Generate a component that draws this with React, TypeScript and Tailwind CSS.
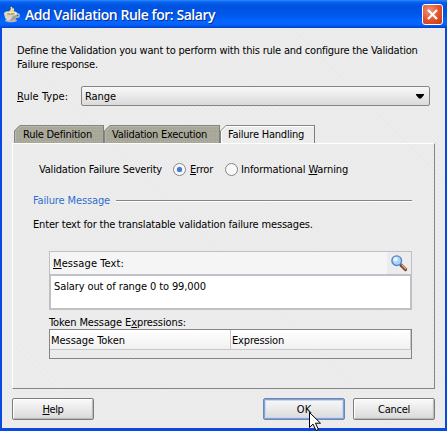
import type { ReactNode } from "react";

function Key({ children }: { children: ReactNode }) {
  return <span className="underline decoration-1 underline-offset-1">{children}</span>;
}

function CupIcon() {
  return (
    <svg width="18" height="20" viewBox="0 0 18 20" className="mr-[3px] shrink-0">
      <ellipse cx="8" cy="16.5" rx="6" ry="1.8" fill="#b9b7b2" />
      <ellipse cx="14" cy="11.5" rx="2.200" ry="1.800" fill="none" stroke="#c5c1b8" strokeWidth="1.400" />
      <path d="M1.200 9.500c0 4.500 2.600 7.600 6.500 7.600s6.500-3.100 6.500-7.600z" fill="#d9d6ce" />
      <path d="M8 17c3.600-.3 6.200-3 6.200-7.500H10c0 3-1 5.500-4 7z" fill="#a3a09a" />
      <ellipse cx="7.700" cy="9.500" rx="6.500" ry="2.300" fill="#f4f1e8" stroke="#b9b5aa" strokeWidth=".6" />
      <ellipse cx="7.700" cy="9.800" rx="4.300" ry="1.100" fill="#b39a62" />
      <path d="M8 9.500c-3.500-2 3-3 0-6.500M9.500 9c-1-1.500 2-2.500 .5-4.500" fill="none" stroke="#ffe680" strokeWidth="1.600" />
    </svg>
  );
}

function Magnifier() {
  return (
    <svg width="18" height="18" viewBox="0 0 18 18">
      <path d="M11 11l4.500 4.500" stroke="#7a4632" strokeWidth="3.200" strokeLinecap="round" />
      <path d="M12 11l3.700 3.700" stroke="#dbaa86" strokeWidth="1.300" strokeLinecap="round" />
      <circle cx="6.700" cy="6.700" r="4.800" fill="#a9d3fb" stroke="#5284cc" strokeWidth="1.400" />
      <circle cx="5.500" cy="5.300" r="2.200" fill="#e8f5ff" />
    </svg>
  );
}

function Tab({ label, className, active }: { label: string; className: string; active?: boolean }) {
  return (
    <div className={`relative h-[18px] shrink-0 pt-[3px] ${active ? "z-10" : ""} ${className}`}>
      <svg className="absolute inset-0 h-full w-full" aria-hidden="true">
        <defs>
          <pattern id="dither" width="4" height="4" patternUnits="userSpaceOnUse">
            <rect width="4" height="4" fill="#a8a69c" />
            <rect width="1" height="1" fill="#b3c080" />
            <rect x="2" y="2" width="1" height="1" fill="#a0b884" />
            <rect x="2" width="1" height="1" fill="#b3a9ae" />
          </pattern>
        </defs>
        <path d="M0 18V6L6 0H400V18z" fill={active ? "#ececec" : "url(#dither)"} />
        <path d="M.5 18V6L6 .5H400" fill="none" stroke="#858585" />
        <path d="M1.500 18V6.500L6.500 1.500H400" fill="none" stroke={active ? "#fff" : "#b8b6ac"} />
      </svg>
      <div className="absolute top-0 right-0 h-[18px] w-px bg-[#7d7d7d]" />
      <span className="relative">{label}</span>
    </div>
  );
}

function Button({ children, focused }: { children: ReactNode; focused?: boolean }) {
  return (
    <button
      className={`h-[22px] w-[82px] rounded-[2px] border bg-linear-to-b from-[#fafafa] to-[#d9d9d9] pt-[2px] leading-[14px] ${
        focused
          ? "border-[#7186a8] shadow-[inset_0_0_0_1px_#7da3dc,inset_0_0_0_2px_#c8d9f2]"
          : "border-[#7c7c7c] shadow-[inset_1px_1px_0_#fff,inset_-1px_-1px_1px_#b9b9b9]"
      }`}
    >
      {children}
    </button>
  );
}

export default function App() {
  return (
    <div className="relative flex h-[431px] w-[447px] flex-col overflow-hidden bg-[#0a49e0] font-['DejaVu_Sans_Condensed','DejaVu_Sans',sans-serif] text-[11px] leading-[14px] whitespace-nowrap text-black">
      <header className="flex h-[28px] shrink-0 items-center bg-[linear-gradient(180deg,#2a8cff_0,#0a62f2_2px,#0052de_6px,#0056ea_14px,#0566ff_22px,#0560f8_25px,#003fcf_28px)] pr-[4px] pl-[3px]">
        <CupIcon />
        <h1 className="flex-1 pt-[2px] pl-px font-['Open_Sans',sans-serif] text-[14px] leading-[18px] font-semibold tracking-[-0.46px] text-white [text-shadow:1px_1px_0_#0a2f8f]">
          Add Validation Rule for: Salary
        </h1>
        <div className="mt-px flex h-[21px] w-[21px] items-center justify-center rounded-[3px] border border-white bg-[radial-gradient(circle_at_35%_30%,#f0937a,#e0512c_55%,#c03a14)]">
          <svg width="13" height="13" viewBox="0 0 13 13">
            <path d="M2 2l9 9M11 2l-9 9" stroke="#fff" strokeWidth="2.200" />
          </svg>
        </div>
      </header>

      <main className="mr-[2px] mb-[3px] ml-[2px] flex-1 bg-[#ececec] bg-[repeating-linear-gradient(45deg,#eeeeee_0_1.4px,#e9e9e9_1.4px_2.8px)] pt-[16px] pr-[10px] pl-[10px]">
        <p className="pl-[5px] tracking-[-0.21px]">
          Define the Validation you want to perform with this rule and configure the Validation
          <br />
          <span className="tracking-[-0.16px]">Failure response.</span>
        </p>

        <div className="mt-[14px] flex items-center pl-[5px]">
          <label className="w-[64px] pt-[2px] tracking-[0.05px]">
            <Key>R</Key>ule Type:
          </label>
          <div className="flex h-[20px] w-[349px] items-center justify-between rounded-[2px] border border-[#858585] bg-linear-to-b from-[#f8f8f8] to-[#dadada] pr-[5px] pl-[3px] tracking-[-0.07px]">
            <span className="pt-[2px]">Range</span>
            <svg width="8" height="5" viewBox="0 0 8 5">
              <path d="M0 0h8v1L5 4.500H3L0 1z" />
            </svg>
          </div>
        </div>

        <div className="mt-[19px] flex pl-[2px]">
          <Tab label="Rule Definition" className="w-[90px] pl-[9px] tracking-[-0.24px]" />
          <Tab label="Validation Execution" className="w-[116px] pl-[8px] tracking-[-0.27px]" />
          <Tab label="Failure Handling" className="w-[95px] pl-[8px] tracking-[-0.23px]" active />
        </div>

        <section className="h-[246px] w-[423px] border border-t-white border-r-[#858585] border-b-[#858585] border-l-white pt-[19px]">
          <div className="flex items-center pl-[26px]">
            <span className="w-[134px] tracking-[-0.2px]">Validation Failure Severity</span>
            <span className="-mt-[2px] flex h-[13px] w-[13px] items-center justify-center rounded-full border border-[#858585] bg-[#fafafa]">
              <span className="h-[5px] w-[5px] rounded-full bg-[#4a7bd0] shadow-[0_0_1px_#4a7bd0]" />
            </span>
            <span className="w-[39px] pl-[4px] tracking-[-0.22px]">
              <Key>E</Key>rror
            </span>
            <span className="-mt-[2px] h-[13px] w-[13px] rounded-full border border-[#858585] bg-[#f8f8f8]" />
            <span className="pl-[3px] tracking-[-0.13px]">
              Informational <Key>W</Key>arning
            </span>
          </div>

          <div className="mt-[17px] flex items-center pl-[20px] text-[#2f6fce]">
            <span className="w-[83px] tracking-[-0.13px]">Failure Message</span>
            <span className="-mt-px h-px w-[296px] bg-[#858585] shadow-[0_1px_0_#fff]" />
          </div>

          <p className="mt-[10px] pl-[20px] tracking-[-0.17px]">
            Enter text for the translatable validation failure messages.
          </p>

          <div className="mt-[19px] ml-[36px] flex h-[59px] w-[363px] flex-col border border-[#c0c0c4] bg-[#f5f5f5]">
            <div className="flex h-[22px]">
              <span className="flex-1 pt-[5px] pl-[3px] tracking-[0.1px]">
                <Key>M</Key>essage Text:
              </span>
              <span className="flex w-[24px] justify-center bg-[#ececec] pt-[2px]">
                <Magnifier />
              </span>
            </div>
            <div className="flex-1 border border-t-2 border-[#c0c0c8] bg-white pt-[4px] pl-[3px] tracking-[-0.11px]">
              Salary out of range 0 to 99,000
            </div>
          </div>

          <div className="mt-[5px] h-[14px] pt-px pl-[36px] tracking-[-0.11px]">
            Token Message E<Key>x</Key>pressions:
          </div>
          <div className="ml-[36px] h-[30px] w-[363px] border border-[#858585]">
            <div className="flex h-[20px] border-b border-[#c8c8c8] bg-linear-to-b from-white to-[#f1f1f1]">
              <span className="w-[181px] border-r border-[#c8c8c8] pt-[4px] pl-[1px] tracking-[-0.04px]">
                Message Token
              </span>
              <span className="flex-1 border-r border-[#c8c8c8] pt-[4px] pl-[1px] tracking-[-0.17px]">
                Expression
              </span>
            </div>
          </div>
        </section>

        <footer className="mt-[9px] flex">
          <Button>
            <span className="tracking-[-0.39px]">
              <Key>H</Key>elp
            </span>
          </Button>
          <div className="ml-auto flex gap-[8px]">
            <Button focused>OK</Button>
            <Button>
              <span className="tracking-[-0.26px]">Cancel</span>
            </Button>
          </div>
        </footer>
      </main>

      <svg className="absolute top-[412px] left-[309px]" width="14" height="19" viewBox="0 0 14 19">
        <path d="M.5.500v15l3.500-3.400 3 6.400 2.400-1.100-2.900-6.200H11.500z" fill="#fff" stroke="#000" />
      </svg>
    </div>
  );
}
